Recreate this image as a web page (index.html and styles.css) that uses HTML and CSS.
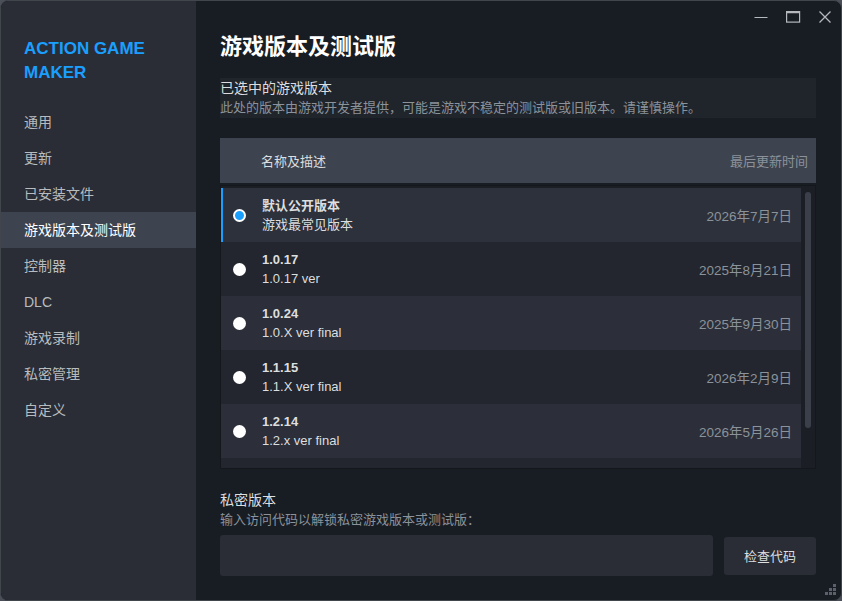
FILE: index.html
```html
<!DOCTYPE html>
<html lang="zh-CN">
<head>
    <meta charset="UTF-8">
    <title>ACTION GAME MAKER - 属性</title>
    <link rel="stylesheet" href="styles.css">
</head>
<body>
    <div class="window">
        <aside class="sidebar">
            <div class="game-title">ACTION GAME<br>MAKER</div>
            <nav class="nav">
                <div class="nav-item">通用</div>
                <div class="nav-item">更新</div>
                <div class="nav-item">已安装文件</div>
                <div class="nav-item active">游戏版本及测试版</div>
                <div class="nav-item">控制器</div>
                <div class="nav-item">DLC</div>
                <div class="nav-item">游戏录制</div>
                <div class="nav-item">私密管理</div>
                <div class="nav-item">自定义</div>
            </nav>
        </aside>

        <main class="main">
            <h1 class="page-title">游戏版本及测试版</h1>

            <div class="section-box">
                <div class="section-head">已选中的游戏版本</div>
                <div class="section-desc">此处的版本由游戏开发者提供，可能是游戏不稳定的测试版或旧版本。请谨慎操作。</div>
            </div>

            <div class="table-head">
                <span>名称及描述</span>
                <span class="muted">最后更新时间</span>
            </div>

            <div class="branch-list">
                <div class="rows">
                    <div class="row selected">
                        <span class="radio on"></span>
                        <div class="row-text">
                            <div class="row-name">默认公开版本</div>
                            <div class="row-desc">游戏最常见版本</div>
                        </div>
                        <span class="row-date">2026年7月7日</span>
                    </div>
                    <div class="row">
                        <span class="radio"></span>
                        <div class="row-text">
                            <div class="row-name">1.0.17</div>
                            <div class="row-desc">1.0.17 ver</div>
                        </div>
                        <span class="row-date">2025年8月21日</span>
                    </div>
                    <div class="row">
                        <span class="radio"></span>
                        <div class="row-text">
                            <div class="row-name">1.0.24</div>
                            <div class="row-desc">1.0.X ver final</div>
                        </div>
                        <span class="row-date">2025年9月30日</span>
                    </div>
                    <div class="row">
                        <span class="radio"></span>
                        <div class="row-text">
                            <div class="row-name">1.1.15</div>
                            <div class="row-desc">1.1.X ver final</div>
                        </div>
                        <span class="row-date">2026年2月9日</span>
                    </div>
                    <div class="row">
                        <span class="radio"></span>
                        <div class="row-text">
                            <div class="row-name">1.2.14</div>
                            <div class="row-desc">1.2.x ver final</div>
                        </div>
                        <span class="row-date">2026年5月26日</span>
                    </div>
                    <!-- next row, scrolled out of view -->
                    <div class="row"></div>
                </div>
                <div class="scroll"><div class="thumb"></div></div>
            </div>

            <div class="private-head">私密版本</div>
            <div class="section-desc">输入访问代码以解锁私密游戏版本或测试版：</div>
            <div class="code-row">
                <input class="code-input" type="text">
                <button class="code-btn">检查代码</button>
            </div>
        </main>

        <div class="win-controls">
            <svg width="16" height="16" viewBox="0 0 16 16"><path d="M1.5 8.5h13" stroke="#b5b9bd" stroke-width="1.2"/></svg>
            <svg width="16" height="16" viewBox="0 0 16 16"><rect x="1.6" y="2.6" width="13" height="10.5" fill="none" stroke="#b5b9bd" stroke-width="1.2"/><path d="M1.6 3.4h13" stroke="#b5b9bd" stroke-width="1.6"/></svg>
            <svg width="16" height="16" viewBox="0 0 16 16"><path d="M2.5 2.5l11 11M13.5 2.5l-11 11" stroke="#b5b9bd" stroke-width="1.3"/></svg>
        </div>

        <svg class="grip" width="12" height="12" viewBox="0 0 12 12" fill="#5b606a">
            <rect x="9" y="0" width="3" height="3"/>
            <rect x="5" y="4" width="3" height="3"/><rect x="9" y="4" width="3" height="3"/>
            <rect x="1" y="8" width="3" height="3"/><rect x="5" y="8" width="3" height="3"/><rect x="9" y="8" width="3" height="3"/>
        </svg>
    </div>
</body>
</html>
```

FILE: styles.css
```css
:root {
    --side: #2a2d35;
    --main: #181c23;
    --box: #20242b;
    --head: #3d4450;
    --row-a: #2c2f39;
    --row-b: #23262e;
    --accent: #1a9fff;
    --text: #dcdedf;
    --text-nav: #b8bcbf;
    --muted: #8b929a;
}
html, body {
    margin: 0; height: 100%;
    background: #4b5058;
    font-family: 'Liberation Sans', 'Noto Sans CJK SC', sans-serif;
    color: var(--text);
}
.window {
    position: relative;
    height: 100%; box-sizing: border-box;
    display: flex;
    border: 1px solid #41454c; border-radius: 8px;
    overflow: hidden;
    background: var(--main);
}
.sidebar {
    width: 195px; flex: none;
    background: var(--side);
    padding-top: 36px;
}
.game-title {
    color: var(--accent);
    font-size: 17px; font-weight: 700; line-height: 24px;
    padding-left: 23px;
    margin-bottom: 19px;
}
.nav-item {
    height: 36px; line-height: 36px;
    padding-left: 23px;
    font-size: 14px;
    color: var(--text-nav);
}
.nav-item.active { background: var(--head); color: #fff; }

.main {
    flex: 1;
    padding: 29px 25px 0 24px;
    display: flex; flex-direction: column;
}
.page-title {
    margin: 0;
    font-size: 22px; font-weight: 700; line-height: 34px;
    color: #fff;
}
.section-box {
    margin-top: 14px;
    background: var(--box);
}
.section-head, .private-head {
    font-size: 14px; line-height: 20px; color: var(--text);
}
.section-desc {
    font-size: 13px; line-height: 20px; color: var(--muted);
}
.table-head {
    margin-top: 20px;
    height: 45px;
    background: var(--head);
    display: flex; align-items: center; justify-content: space-between;
    padding: 0 8px 0 41px;
    font-size: 13px;
}
.muted { color: var(--muted); }

.branch-list {
    margin-top: 2px;
    height: 284px; box-sizing: border-box;
    border: 1px solid #14171c;
    background: #1b1e25;
    padding-top: 2px;
    display: flex;
    overflow: hidden;
}
.rows { flex: 1; }
.row {
    height: 54px;
    display: flex; align-items: center;
    padding: 0 9px 0 12px;
    background: var(--row-b);
}
.row:nth-child(odd) { background: var(--row-a); }
.row.selected { box-shadow: inset 2px 0 0 var(--accent); background: #2d313b; }
.radio {
    width: 13px; height: 13px; border-radius: 50%;
    background: #fff; flex: none;
    box-sizing: border-box;
}
.radio.on { border: 2px solid #fff; background: var(--accent); }
.row-text { flex: 1; padding-left: 16px; font-size: 13px; line-height: 19px; }
.row-name { font-weight: 700; color: var(--text); }
.row-desc { color: var(--text); }
.row-date { font-size: 13.5px; color: var(--muted); }
.scroll { width: 14px; flex: none; padding-top: 4px; }
.thumb {
    width: 6px; height: 236px; margin-left: 4px;
    border-radius: 3px; background: #3a3f4a;
}

.private-head { margin-top: 21px; }
.code-row {
    margin-top: 5px;
    display: flex; align-items: center; gap: 11px;
}
.code-input {
    flex: 1; height: 41px; box-sizing: border-box;
    background: var(--side); border: none; border-radius: 3px;
    outline: none;
}
.code-btn {
    width: 92px; height: 38px;
    background: var(--side); border: none; border-radius: 3px;
    color: var(--text); font-family: inherit; font-size: 13px;
}
.win-controls {
    position: absolute; top: 8px; right: 8px;
    display: flex; gap: 16px;
}
.grip { position: absolute; right: 5px; bottom: 4px; }
```
